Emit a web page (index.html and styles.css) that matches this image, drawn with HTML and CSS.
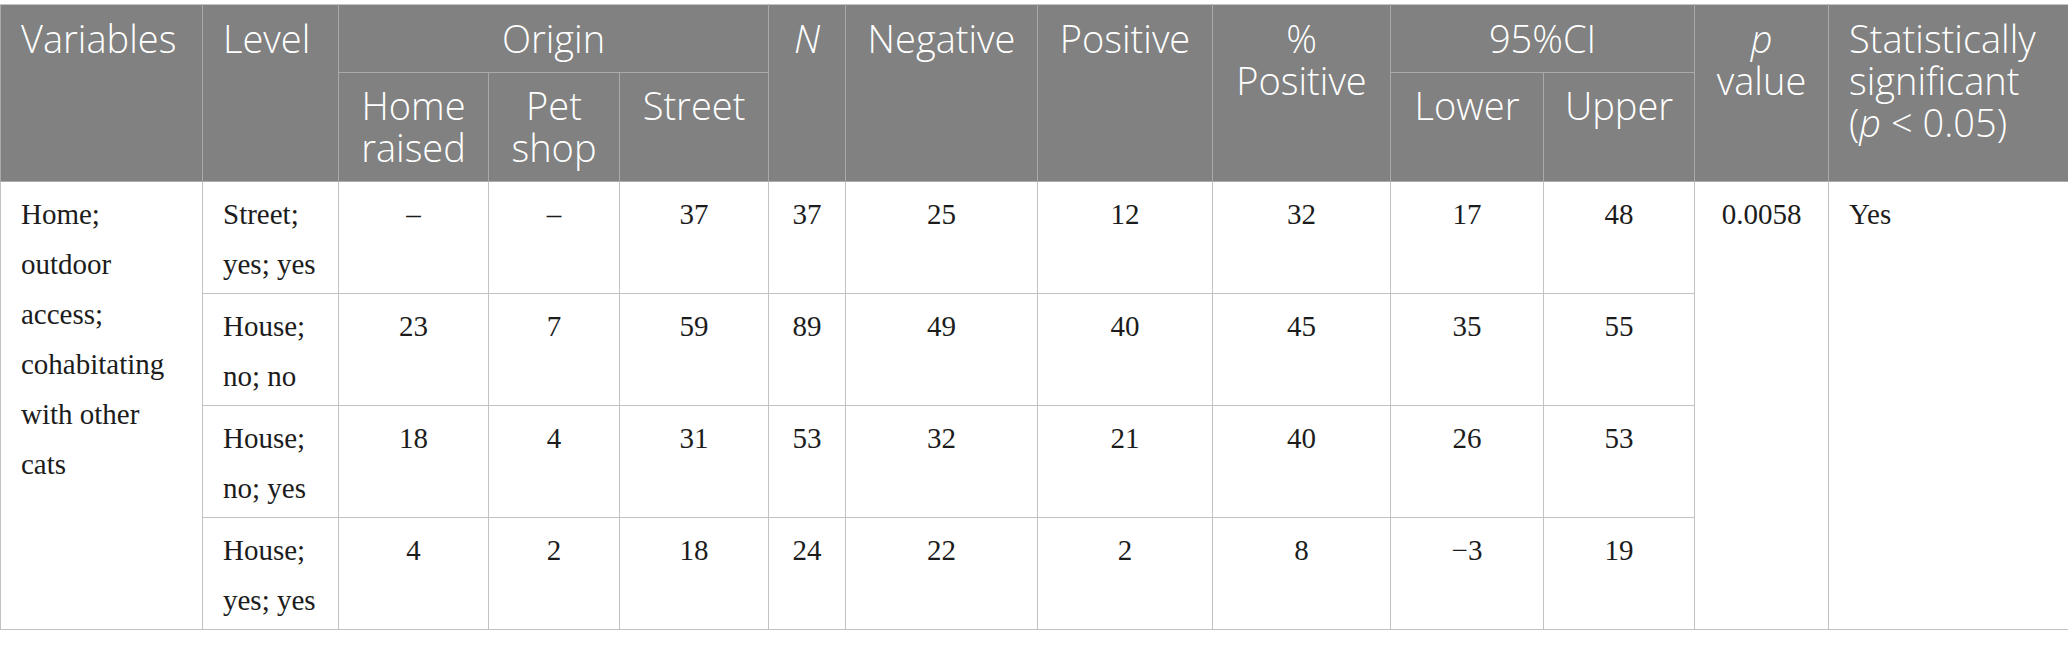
FILE: index.html
```html
<!DOCTYPE html>
<html lang="en">
<head>
<meta charset="utf-8">
<title>Table</title>
<link rel="stylesheet" href="styles.css">
</head>
<body>
<table class="data">
  <colgroup>
    <col class="c1"><col class="c2"><col class="c3"><col class="c4"><col class="c5"><col class="c6"><col class="c7"><col class="c8"><col class="c9"><col class="c10"><col class="c11"><col class="c12"><col class="c13">
  </colgroup>
  <thead>
    <tr class="h1">
      <th rowspan="2" class="left">Variables</th>
      <th rowspan="2" class="left">Level</th>
      <th colspan="3">Origin</th>
      <th rowspan="2"><i>N</i></th>
      <th rowspan="2">Negative</th>
      <th rowspan="2">Positive</th>
      <th rowspan="2">%<br>Positive</th>
      <th colspan="2">95%CI</th>
      <th rowspan="2"><i>p</i><br>value</th>
      <th rowspan="2" class="left">Statistically<br>significant<br>(<i>p</i> &lt; 0.05)</th>
    </tr>
    <tr class="h2">
      <th>Home<br>raised</th>
      <th>Pet<br>shop</th>
      <th>Street</th>
      <th>Lower</th>
      <th>Upper</th>
    </tr>
  </thead>
  <tbody>
    <tr>
      <td rowspan="4" class="left">Home;<br>outdoor<br>access;<br>cohabitating<br>with other<br>cats</td>
      <td class="left">Street;<br>yes; yes</td>
      <td>–</td><td>–</td><td>37</td><td>37</td><td>25</td><td>12</td><td>32</td><td>17</td><td>48</td>
      <td rowspan="4">0.0058</td>
      <td rowspan="4" class="left">Yes</td>
    </tr>
    <tr>
      <td class="left">House;<br>no; no</td>
      <td>23</td><td>7</td><td>59</td><td>89</td><td>49</td><td>40</td><td>45</td><td>35</td><td>55</td>
    </tr>
    <tr>
      <td class="left">House;<br>no; yes</td>
      <td>18</td><td>4</td><td>31</td><td>53</td><td>32</td><td>21</td><td>40</td><td>26</td><td>53</td>
    </tr>
    <tr>
      <td class="left">House;<br>yes; yes</td>
      <td>4</td><td>2</td><td>18</td><td>24</td><td>22</td><td>2</td><td>8</td><td>−3</td><td>19</td>
    </tr>
  </tbody>
</table>
</body>
</html>
```
FILE: styles.css
```css
html, body {
  margin: 0;
  padding: 0;
  background: #ffffff;
}
body {
  padding-top: 4px;
}
.data {
  width: 2068px;
  border-collapse: collapse;
  table-layout: fixed;
}
.c1 { width: 202px; }
.c2 { width: 136px; }
.c3 { width: 150px; }
.c4 { width: 131px; }
.c5 { width: 149px; }
.c6 { width: 77px; }
.c7 { width: 192px; }
.c8 { width: 175px; }
.c9 { width: 178px; }
.c10 { width: 153px; }
.c11 { width: 151px; }
.c12 { width: 134px; }
.c13 { width: 240px; }

.data th {
  background: #808180;
  color: #ffffff;
  font-family: "Open Sans", "Noto Sans", sans-serif;
  font-weight: 300;
  font-size: 38px;
  line-height: 42px;
  text-align: center;
  vertical-align: top;
  padding: 12px 10px 13px 10px;
  border: 1px solid #a9aaa9;
  white-space: nowrap;
}
.data tr.h1 th {
  border-top-color: #c4c4c4;
}
.data tr.h2 th {
  padding-top: 11px;
  padding-bottom: 13px;
}
.data th.left {
  text-align: left;
  padding-left: 20px;
}
.data td {
  font-family: "Liberation Serif", "Times New Roman", serif;
  font-size: 29px;
  line-height: 50px;
  color: #1c1c1c;
  text-align: center;
  vertical-align: top;
  padding: 7px 12px 4px 12px;
  border: 1px solid #c2c2c2;
  white-space: nowrap;
}
.data td.left {
  text-align: left;
  padding-left: 20px;
}
.data i {
  font-style: italic;
}
```
